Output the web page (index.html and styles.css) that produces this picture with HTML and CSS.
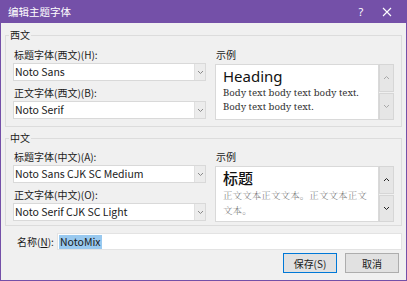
FILE: index.html
```html
<!DOCTYPE html>
<html lang="zh-CN">
<head>
<meta charset="utf-8">
<title>编辑主题字体</title>
<link rel="stylesheet" href="styles.css">
</head>
<body>
<div class="window">
  <div class="titlebar">
    <span class="title">编辑主题字体</span>
    <span class="help">?</span>
    <span class="close"><svg width="10" height="10" viewBox="0 0 10 10"><path d="M1 1L9 9M9 1L1 9" stroke="#fff" stroke-width="1.1" fill="none"/></svg></span>
  </div>
  <div class="content">
    <fieldset class="group g1">
      <legend>西文</legend>
      <div class="cols">
        <div class="left">
          <div class="label">标题字体(西文)(H):</div>
          <div class="select"><span class="val">Noto Sans</span><span class="drop"><svg width="7" height="5" viewBox="0 0 7 5"><path d="M1 1L3.5 3.5L6 1" stroke="#8a8a8a" fill="none"/></svg></span></div>
          <div class="label gap">正文字体(西文)(B):</div>
          <div class="select"><span class="val">Noto Serif</span><span class="drop"><svg width="7" height="5" viewBox="0 0 7 5"><path d="M1 1L3.5 3.5L6 1" stroke="#8a8a8a" fill="none"/></svg></span></div>
        </div>
        <div class="right">
          <div class="label">示例</div>
          <div class="preview">
            <div class="pbox latin">
              <div class="ph">Heading</div>
              <div class="pb">Body text body text body text. Body text body text.</div>
            </div>
            <div class="scroll disabled">
              <div class="sbtn"><svg width="7" height="5" viewBox="0 0 7 5"><path d="M1 4L3.5 1.5L6 4" stroke="currentColor" fill="none"/></svg></div>
              <div class="sbtn"><svg width="7" height="5" viewBox="0 0 7 5"><path d="M1 1L3.5 3.5L6 1" stroke="currentColor" fill="none"/></svg></div>
            </div>
          </div>
        </div>
      </div>
    </fieldset>
    <fieldset class="group g2">
      <legend>中文</legend>
      <div class="cols">
        <div class="left">
          <div class="label">标题字体(中文)(A):</div>
          <div class="select"><span class="val">Noto Sans CJK SC Medium</span><span class="drop"><svg width="7" height="5" viewBox="0 0 7 5"><path d="M1 1L3.5 3.5L6 1" stroke="#8a8a8a" fill="none"/></svg></span></div>
          <div class="label gap">正文字体(中文)(O):</div>
          <div class="select"><span class="val">Noto Serif CJK SC Light</span><span class="drop"><svg width="7" height="5" viewBox="0 0 7 5"><path d="M1 1L3.5 3.5L6 1" stroke="#8a8a8a" fill="none"/></svg></span></div>
        </div>
        <div class="right">
          <div class="label">示例</div>
          <div class="preview">
            <div class="pbox cjk">
              <div class="ph">标题</div>
              <div class="pb">正文文本正文文本。正文文本正文文本。</div>
            </div>
            <div class="scroll">
              <div class="sbtn"><svg width="7" height="5" viewBox="0 0 7 5"><path d="M1 4L3.5 1.5L6 4" stroke="currentColor" fill="none"/></svg></div>
              <div class="sbtn"><svg width="7" height="5" viewBox="0 0 7 5"><path d="M1 1L3.5 3.5L6 1" stroke="currentColor" fill="none"/></svg></div>
            </div>
          </div>
        </div>
      </div>
    </fieldset>
    <div class="namerow">
      <span class="nlabel">名称(<u>N</u>):</span>
      <div class="input"><span class="sel">NotoMix</span></div>
    </div>
    <div class="buttons">
      <button class="btn default">保存(S)</button>
      <button class="btn">取消</button>
    </div>
  </div>
</div>
</body>
</html>
```

FILE: styles.css
```css
html, body {
  margin: 0;
  padding: 0;
  background: #f0f0f0;
}

.window {
  width: 407px;
  height: 281px;
  box-sizing: border-box;
  border: 1px solid #7450a8;
  border-top: none;
  background: #f0f0f0;
  font-family: "Noto Sans CJK SC", "Noto Sans", sans-serif;
  font-size: 10px;
  color: #1a1a1a;
  overflow: hidden;
}

.titlebar {
  height: 23px;
  margin: 0 -1px;
  background: #7450a8;
  color: #fff;
  display: flex;
  align-items: center;
  padding-left: 8px;
  font-size: 10.5px;
}

.help {
  margin-left: auto;
  width: 20px;
  text-align: center;
  font-family: "Noto Sans", sans-serif;
  font-size: 11px;
}

.close {
  width: 32px;
  margin-right: 4px;
  display: flex;
  justify-content: center;
}

.content {
  padding: 6px 3px 0 4px;
}

.group {
  margin: 0;
  width: 397px;
  box-sizing: border-box;
  border: 1px solid #dcdcdc;
  padding: 6px 7px 6px 7px;
  min-width: 0;
}

.group legend {
  margin-left: -4px;
  padding: 0 1px;
  line-height: 12px;
  font-size: 10px;
}

.g2 {
  margin-top: 5px;
  padding-top: 5px;
  padding-bottom: 3px;
}

.cols {
  display: grid;
  grid-template-columns: 193px 179px;
  column-gap: 9px;
  align-items: start;
}

.label {
  height: 16px;
  line-height: 16px;
  padding-left: 1px;
}

.label.gap {
  margin-top: 4px;
}

.select {
  height: 18px;
  box-sizing: border-box;
  border: 1px solid #d9d9d9;
  background: #fff;
  display: flex;
}

.select .val {
  flex: 1;
  padding-left: 1px;
  line-height: 16px;
  font-size: 10.5px;
  white-space: nowrap;
}

.select .drop {
  width: 10px;
  border-left: 1px solid #e0e0e0;
  background: #ececec;
  display: flex;
  align-items: center;
  justify-content: center;
}

.preview {
  margin-top: 1px;
  height: 56px;
  display: flex;
}

.pbox {
  width: 164px;
  box-sizing: border-box;
  background: #fff;
  border: 1px solid #d9d9d9;
  padding: 1px 7px 0 7px;
  overflow: hidden;
}

.latin .ph {
  font-family: "Noto Sans", sans-serif;
  font-size: 15px;
  line-height: 20px;
  color: #111;
}

.latin .pb {
  font-family: "Noto Serif", "DejaVu Serif", serif;
  font-size: 9.6px;
  line-height: 14px;
  color: #333;
}

.cjk .ph {
  font-family: "Noto Sans CJK SC", sans-serif;
  font-weight: 500;
  font-size: 15px;
  line-height: 20px;
  color: #111;
}

.cjk .pb {
  font-family: "Noto Serif CJK SC", "Noto Sans CJK SC", serif;
  font-weight: 300;
  font-size: 9.6px;
  line-height: 15px;
  color: #777;
}

.scroll {
  width: 15px;
  display: flex;
  flex-direction: column;
  gap: 1px;
  color: #222;
}

.scroll.disabled {
  color: #a8a8a8;
}

.sbtn {
  flex: 1;
  box-sizing: border-box;
  border: 1px solid #d6d6d6;
  background: #e6e6e6;
  display: flex;
  align-items: center;
  justify-content: center;
}

.namerow {
  margin-top: 7px;
  display: flex;
  align-items: center;
  padding-left: 12px;
}

.nlabel {
  width: 40px;
}

.input {
  width: 345px;
  height: 17px;
  box-sizing: border-box;
  border: 1px solid #e3e3e3;
  background: #fff;
  display: flex;
  align-items: center;
  padding-left: 1px;
}

.sel {
  background: #99c9ef;
  line-height: 14px;
  padding: 0 1px;
  font-size: 10.5px;
}

.buttons {
  margin-top: 3px;
  display: flex;
  justify-content: flex-end;
  gap: 8px;
  padding-right: 4px;
}

.btn {
  height: 20px;
  width: 54px;
  box-sizing: border-box;
  margin: 0;
  padding: 0;
  border: 1px solid #adadad;
  background: #e1e1e1;
  font-family: "Noto Sans CJK SC", "Noto Sans", sans-serif;
  font-size: 10px;
  color: #1a1a1a;
}

.btn.default {
  border-color: #0078d7;
}
```
